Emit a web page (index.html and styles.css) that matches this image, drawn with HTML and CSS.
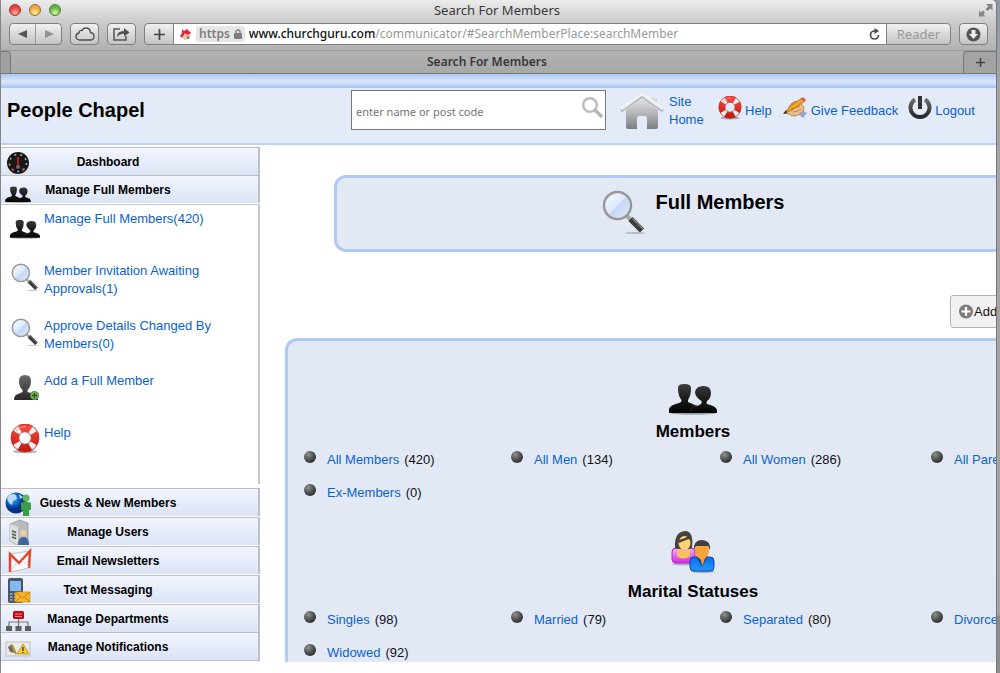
FILE: index.html
```html
<!DOCTYPE html>
<html lang="en">
<head>
<meta charset="utf-8">
<title>Search For Members</title>
<link rel="stylesheet" href="styles.css">
</head>
<body>
<svg class="defs" width="0" height="0" aria-hidden="true">
  <defs>
    <linearGradient id="gHome" x1="0" y1="0" x2="0" y2="1"><stop offset="0" stop-color="#e4e6ea"/><stop offset=".5" stop-color="#b5b7ba"/><stop offset="1" stop-color="#7c7d80"/></linearGradient>
    <linearGradient id="gBlack" x1="0" y1="0" x2="0" y2="1"><stop offset="0" stop-color="#3c3c3c"/><stop offset=".6" stop-color="#161616"/><stop offset="1" stop-color="#050505"/></linearGradient>
    <linearGradient id="gGrey" x1="0" y1="0" x2="0" y2="1"><stop offset="0" stop-color="#6b6b6b"/><stop offset="1" stop-color="#262626"/></linearGradient>
    <linearGradient id="gLens" x1="0" y1="0" x2="1" y2="1"><stop offset="0" stop-color="#fbfdff"/><stop offset=".5" stop-color="#dce8fb"/><stop offset=".52" stop-color="#c3d7f7"/><stop offset="1" stop-color="#e4eefc"/></linearGradient>
    <linearGradient id="gRed" x1="0" y1="0" x2="0" y2="1"><stop offset="0" stop-color="#f5463c"/><stop offset="1" stop-color="#c51f1a"/></linearGradient>
    <linearGradient id="gPink" x1="0" y1="0" x2="0" y2="1"><stop offset="0" stop-color="#f3b0f5"/><stop offset="1" stop-color="#d02be0"/></linearGradient>
    <linearGradient id="gBlue" x1="0" y1="0" x2="0" y2="1"><stop offset="0" stop-color="#1767e8"/><stop offset="1" stop-color="#1a9bff"/></linearGradient>
    <radialGradient id="gGlobe" cx=".35" cy=".3"><stop offset="0" stop-color="#4fb4ff"/><stop offset=".6" stop-color="#0b62c4"/><stop offset="1" stop-color="#052f80"/></radialGradient>
    <radialGradient id="gBadge"><stop offset="0" stop-color="#b9e09c"/><stop offset="1" stop-color="#4c8a35"/></radialGradient>
    <symbol id="people" viewBox="0 0 48 32">
      <ellipse cx="24" cy="30" rx="23" ry="1.7" fill="#000" opacity=".3"/>
      <path fill="url(#gBlack)" d="M9 5Q9 1 15.500 1T22 5Q22 12 20 15Q18.500 17 19 19L28 23Q33 21.500 33 19Q33 18 31 17Q26 13 26 9Q27 3 34.500 3T42 10Q42 15 38 18Q37 20 38 21Q47 23 48 27V30H0V26Q1 22 10 20Q13 19 12.500 17Q9 13 9 5Z"/>
      <path d="M26 24Q33 22 33 19M22 29Q21 24 28 22" fill="none" stroke="#393939" stroke-width=".7"/>
    </symbol>
    <symbol id="magnifier" viewBox="0 0 44 44">
      <ellipse cx="33" cy="43" rx="10" ry="1" fill="#777" opacity=".4"/>
      <path d="M25 26L30 31" stroke="#a9a9a6" stroke-width="4"/>
      <path d="M28.500 29L40 40.500" stroke="#3b3b3b" stroke-width="6"/>
      <path d="M30.500 28.500L41 39" stroke="#858585" stroke-width="1.200"/>
      <circle cx="15.500" cy="15.500" r="13.500" fill="url(#gLens)" stroke="#979797" stroke-width="2.500"/>
      <circle cx="15.500" cy="15.500" r="12" fill="none" stroke="#d8d8d8" stroke-width=".8"/>
    </symbol>
    <symbol id="lifebuoy" viewBox="0 0 30 30">
      <ellipse cx="15" cy="27.500" rx="12" ry="1.800" fill="#555" opacity=".45"/>
      <circle cx="15" cy="14" r="10" fill="none" stroke="url(#gRed)" stroke-width="8"/>
      <circle cx="15" cy="14" r="10" fill="none" stroke="#f3f1ef" stroke-width="8" stroke-dasharray="4.700 11" stroke-dashoffset="-5.500"/>
      <circle cx="15" cy="14" r="14" fill="none" stroke="#b7201b" stroke-width=".7"/>
      <circle cx="15" cy="14" r="6.300" fill="none" stroke="#a8625e" stroke-width=".8"/>
      <path d="M6 7Q10 2 16 2.500" fill="none" stroke="#ff9a90" stroke-width="1"/>
    </symbol>
  </defs>
</svg>

<div class="window">
  <header class="chrome">
    <div class="titlebar">
      <div class="lights"><i class="light red"></i><i class="light amber"></i><i class="light green"></i></div>
      <span class="window-title">Search For Members</span>
      <svg class="fullscreen" width="14" height="14" viewBox="0 0 14 14" fill="#858585"><path d="M7 1h6.500v6.500L11.500 5.500L8.500 8L6.500 6L9.500 3.500ZM0 7.500L2 9.500L4 7.500L6 9.500L4.500 11.500L6.500 13.500H0Z"/></svg>
    </div>
    <div class="toolbar">
      <div class="segment">
        <button class="tool back" aria-label="Back"><svg width="10" height="10" viewBox="0 0 10 10"><path d="M9 1V9L0 5Z" fill="#555"/></svg></button>
        <button class="tool forward" aria-label="Forward"><svg width="10" height="10" viewBox="0 0 10 10"><path d="M1 1V9L10 5Z" fill="#929292"/></svg></button>
      </div>
      <button class="tool cloud" aria-label="iCloud tabs"><svg width="20" height="14" viewBox="0 0 20 14"><path d="M5 13Q1 13 1 9.500Q1 6.500 4 6Q4 3 7 3.500Q8 1 11 1Q15 1 15.500 5.500Q19 6 19 9.500Q19 13 15 13Z" fill="none" stroke="#4c4c4c" stroke-width="1.300"/></svg></button>
      <button class="tool share" aria-label="Share"><svg width="17" height="14" viewBox="0 0 17 14"><path d="M7 2H1V13H13V9" fill="none" stroke="#555" stroke-width="1.500"/><path d="M4 10Q4 4 11 4V1L16.500 5.500L11 9.500V6.700Q7 6.500 4 10Z" fill="#505050"/></svg></button>
      <div class="address">
        <button class="add-bookmark" aria-label="Add bookmark"><svg width="11" height="11" viewBox="0 0 11 11"><path d="M5.500 0V11M0 5.500H11" stroke="#444" stroke-width="1.700"/></svg></button>
        <div class="url">
          <svg width="13" height="14" viewBox="0 0 13 14"><path d="M4 5L12 5L11 12L5 13L3 9Z" fill="#e8c5a2"/><path d="M3 2L5 4L8 2L12 6L8 8L6 6L3 11L1 9L3 6Z" fill="#e7203f"/><path d="M8 9H10V12H8Z" fill="#4d9b87"/></svg>
          <span class="secure">https <svg width="8" height="10" viewBox="0 0 8 10"><rect y="4" width="8" height="6" rx="1" fill="#7d7d7d"/><path d="M2 5V3Q2 1 4 1T6 3V5" fill="none" stroke="#7d7d7d" stroke-width="1.400"/></svg></span>
          <span class="path"><b>www.churchguru.com</b>/communicator/#SearchMemberPlace:searchMember</span>
          <button class="reload" aria-label="Reload"><svg width="11" height="12" viewBox="0 0 11 12"><path d="M7.500 3H5.500A4 4 0 1 0 9.500 7" fill="none" stroke="#4b4b4b" stroke-width="1.700"/><path d="M5.500 0L10 3L5.500 6Z" fill="#4b4b4b"/></svg></button>
        </div>
        <button class="reader">Reader</button>
      </div>
      <button class="tool downloads" aria-label="Downloads"><svg width="15" height="15" viewBox="0 0 15 15"><circle cx="7.500" cy="7.500" r="7" fill="#555"/><path d="M5.500 3H9.500V7H12L7.500 12L3 7H5.500Z" fill="#eee"/></svg></button>
    </div>
    <div class="tabs">
      <i class="tab-edge"></i>
      <span class="tab">Search For Members</span>
      <button class="new-tab" aria-label="New tab"><svg width="9" height="9" viewBox="0 0 9 9"><path d="M4.500 0V9M0 4.500H9" stroke="#444" stroke-width="1.500"/></svg></button>
    </div>
  </header>

  <div class="ribbon"></div>
  <div class="site-header">
    <h1 class="brand">People Chapel</h1>
    <form class="search">
      <input type="text" aria-label="Search members" placeholder="enter name or post code">
      <button type="button" aria-label="Search"><svg width="23" height="23" viewBox="0 0 23 23"><circle cx="9" cy="9" r="6.800" fill="none" stroke="#bdbdbd" stroke-width="2.600"/><path d="M14 14L21 21" stroke="#b5b5b5" stroke-width="3.500"/></svg></button>
    </form>
    <nav class="links">
      <a class="home" href="#"><svg width="44" height="38" viewBox="0 0 44 38"><path d="M6 17L22 4L38 17V34Q38 36 36 36H27V25Q27 23 25 23H19Q17 23 17 25V36H8Q6 36 6 34Z" fill="url(#gHome)"/><path d="M31 5H37V13L31 8Z" fill="#d6d8dc"/><path d="M1 18L22 3L43 18" fill="none" stroke="#b4b8be" stroke-width="3"/><path d="M1 16L22 1L43 16" fill="none" stroke="#f0f1f3" stroke-width="3"/></svg><span>Site Home</span></a>
      <a class="help" href="#"><svg width="24" height="24"><use href="#lifebuoy"/></svg>Help</a>
      <a class="feedback" href="#"><svg width="25" height="24" viewBox="0 0 25 24"><path d="M17 13L24 17L20 22L15 18Z" fill="#8eaad8"/><path d="M1 17Q7 13 8 8Q11 4 16 6L21 11Q22 15 17 18Q10 22 6 18Z" fill="#e9bd8d" stroke="#a87749" stroke-width=".8"/><path d="M2 17L7 10L19 2L22 5L9 14Z" fill="#f6a51c" stroke="#9a5c10" stroke-width=".7"/><path d="M18 3L20 1L23 4L21 6Z" fill="#e2554e"/><path d="M8 13Q13 12 17 10M10 16Q14 16 18 13" fill="none" stroke="#a87749" stroke-width=".8"/><path d="M0 18L3 14L4 17Z" fill="#333"/></svg>Give Feedback</a>
      <a class="logout" href="#"><svg width="24" height="24" viewBox="0 0 24 24"><path d="M7 3.500A9.500 9.500 0 1 0 17 3.500" fill="none" stroke="url(#gGrey)" stroke-width="4"/><path d="M12 0V13" stroke="#343434" stroke-width="4"/></svg>Logout</a>
    </nav>
  </div>

  <div class="workspace">
    <aside class="sidebar">
      <button class="bar"><svg width="28" height="26" viewBox="0 0 28 26"><circle cx="14" cy="14" r="11" fill="#171717"/><circle cx="14" cy="14" r="8.500" fill="none" stroke="#aaa" stroke-width="1.600" stroke-dasharray="2 4"/><path d="M14 8V17" stroke="#e22" stroke-width="1.500"/><circle cx="14" cy="18" r="2" fill="#6a6a6a"/><path d="M8 22L10 20M20 22L18 20" stroke="#d22" stroke-width="1.500"/></svg><span>Dashboard</span></button>
      <button class="bar spaced"><svg width="28" height="26" viewBox="0 0 28 26"><use href="#people" x="1" y="9" width="26" height="17"/></svg><span>Manage Full Members</span></button>
      <ul class="menu">
        <li><svg width="30" height="33" viewBox="0 0 30 33"><use href="#people" x="0" y="9" width="30" height="20"/></svg><a href="#">Manage Full Members(420)</a></li>
        <li><svg width="30" height="33" viewBox="0 0 30 33"><use href="#magnifier" x="1" y="1" width="28" height="28"/></svg><a href="#">Member Invitation Awaiting Approvals(1)</a></li>
        <li><svg width="30" height="33" viewBox="0 0 30 33"><use href="#magnifier" x="1" y="1" width="28" height="28"/></svg><a href="#">Approve Details Changed By Members(0)</a></li>
        <li><svg width="30" height="33" viewBox="0 0 30 33"><path d="M9 9Q9 3 15 3T21 9Q21 15 17.500 18V20L24 22Q28 24 28 28H4Q4 23 8 22L12.500 20V18Q9 15 9 9Z" fill="url(#gGrey)"/><circle cx="24.500" cy="23.500" r="4.500" fill="url(#gBadge)"/><path d="M24.500 21V26M22 23.500H27" stroke="#1d4d12" stroke-width="1.300"/></svg><a href="#">Add a Full Member</a></li>
        <li><svg width="30" height="33" viewBox="0 0 30 33"><use href="#lifebuoy" x="0" y="0" width="30" height="30"/></svg><a href="#">Help</a></li>
      </ul>
      <button class="bar spaced"><svg width="28" height="26" viewBox="0 0 28 26"><circle cx="12" cy="13" r="10.500" fill="url(#gGlobe)"/><path d="M5 5Q9 3 12 5L13 9L9 11L8 15L5 13L3 9ZM15 4L19 7L16 9Z" fill="#b8dcf7"/><circle cx="22" cy="8" r="3.500" fill="#5cb765"/><path d="M17 13Q22 10 27 13V20H25V26H19V20H17Z" fill="#3c9e48"/></svg><span>Guests &amp; New Members</span></button>
      <button class="bar spaced"><svg width="28" height="26" viewBox="0 0 28 26"><path d="M6 5L16 1L24 4V22L13 26L6 22Z" fill="#b9bcbc" stroke="#8d9190" stroke-width=".7"/><path d="M6 5L14 8V26L6 22Z" fill="#dcdedd"/><path d="M8 12L12 13.500M8 15L12 16.500M8 18L12 19.500" stroke="#555" stroke-width="1.500"/><circle cx="19.500" cy="14" r="3" fill="#efcfa0"/><path d="M14 26Q14 18 19.500 18T25 26Z" fill="#41659d"/></svg><span>Manage Users</span></button>
      <button class="bar spaced"><svg width="28" height="26" viewBox="0 0 28 26"><path d="M6 6L26 3L25 20L6 24Z" fill="#fafafa" stroke="#c8c2bf"/><path d="M6 24V6L15 15L26 3L25 20" fill="none" stroke="#e3482f" stroke-width="2.500"/><path d="M7 23L13 14M25 19L18 12" stroke="#cfcfcf" stroke-width=".8"/></svg><span>Email Newsletters</span></button>
      <button class="bar spaced"><svg width="28" height="26" viewBox="0 0 28 26"><rect x="4" y="1" width="15" height="25" rx="2" fill="#465567"/><rect x="6" y="4" width="11" height="10" fill="#83b9f0"/><path d="M6 17H17M6 20H17M6 23H17" stroke="#a8b3be" stroke-width="1.600" stroke-dasharray="2.500 1.500"/><rect x="11" y="15" width="15" height="10" fill="#f6b52c" stroke="#d18a0c" stroke-width=".7"/><path d="M11 15L18.500 21L26 15M11 25L16.500 20M26 25L20.500 20" fill="none" stroke="#bd7b0c" stroke-width=".9"/></svg><span>Text Messaging</span></button>
      <button class="bar"><svg width="28" height="26" viewBox="0 0 28 26"><rect x="9" y="5" width="11" height="8" rx="1.500" fill="#c80718"/><path d="M11 8H18M11 10.500H18" stroke="#f08b90"/><path d="M14.500 13V20M5 20V16H24V20" fill="none" stroke="#777" stroke-width="1.200"/><path d="M2 20H8V25H2ZM11.500 20H17.500V25H11.500ZM21 20H27V25H21Z" fill="#5e5e60"/></svg><span>Manage Departments</span></button>
      <button class="bar"><svg width="28" height="26" viewBox="0 0 28 26"><rect x="2" y="8" width="24" height="14" fill="#ebebe6" stroke="#c0c0bd"/><path d="M4 13L8 10L11 19L6 18Z" fill="#6e6e67"/><path d="M8 11L12 20" stroke="#b29732" stroke-width="2"/><path d="M19 10L25 20H13Z" fill="#f8cd2a" stroke="#a88a21" stroke-width=".8"/><path d="M19 13V17M19 18V19" stroke="#333" stroke-width="1.300"/></svg><span>Manage Notifications</span></button>
    </aside>

    <main class="main">
      <div class="canvas">
        <section class="hero panel">
          <svg width="44" height="44"><use href="#magnifier"/></svg>
          <h2>Full Members</h2>
        </section>
        <button class="add"><svg width="14" height="15" viewBox="0 0 14 15"><circle cx="7" cy="7.500" r="7" fill="#7d7d7d"/><path d="M7 3V12M2.500 7.500H11.500" stroke="#fff" stroke-width="2.200"/></svg>Add</button>
        <div class="groups panel">
          <section class="group">
            <svg width="48" height="32"><use href="#people"/></svg>
            <h3>Members</h3>
            <ul class="filters">
              <li><a href="#">All Members</a> (420)</li>
              <li><a href="#">All Men</a> (134)</li>
              <li><a href="#">All Women</a> (286)</li>
              <li><a href="#">All Parents</a></li>
              <li><a href="#">Ex-Members</a> (0)</li>
            </ul>
          </section>
          <section class="group">
            <svg width="44" height="44" viewBox="0 0 44 44"><ellipse cx="12" cy="33" rx="11" ry="1.500" opacity=".25"/><ellipse cx="32" cy="40.500" rx="12" ry="1.500" opacity=".3"/><rect x="1" y="17" width="23" height="15" rx="4" fill="url(#gPink)" stroke="#bd20cc"/><path d="M6 18Q12 22 19 18V25Q12 30 6 25Z" fill="#f7c45b"/><path d="M4 17Q3 1 14 0Q23 0 21 17Q17 19 13 17Q7 19 4 17Z" fill="#45423f"/><ellipse cx="13.500" cy="12" rx="6" ry="7" fill="#fcd36c"/><path d="M7 9Q14 8 19 4L20 10L18 8Q12 10 8 12Z" fill="#45423f"/><rect x="19" y="26" width="24" height="14" rx="4" fill="url(#gBlue)" stroke="#0a45b4"/><path d="M25 25H37L31 36Z" fill="#153f8c"/><path d="M28 24H35L31.500 35Z" fill="#f79b2b"/><ellipse cx="31" cy="20" rx="7" ry="8" fill="#f9a238"/><path d="M23 19Q22 10 30 9Q40 9 39 19L37 15H25Z" fill="#413d3b"/></svg>
            <h3>Marital Statuses</h3>
            <ul class="filters">
              <li><a href="#">Singles</a> (98)</li>
              <li><a href="#">Married</a> (79)</li>
              <li><a href="#">Separated</a> (80)</li>
              <li><a href="#">Divorced</a></li>
              <li><a href="#">Widowed</a> (92)</li>
            </ul>
          </section>
        </div>
      </div>
    </main>
  </div>
</div>
</body>
</html>
```

FILE: styles.css
```css
* { box-sizing: border-box; }

body {
  margin: 0;
  background: linear-gradient(#8d97a8, #a5a5a5 90px, #a3a3a3 615px, #8c8c8c 616px);
  font: 13px/18px "Liberation Sans", Arial, sans-serif;
  color: #111;
}

h1, h2, h3, ul { margin: 0; padding: 0; }
ul { list-style: none; }
svg { flex: none; display: block; }
button { font: inherit; color: inherit; padding: 0; border: 0; background: none; }
a { color: #0a62d0; text-decoration: none; }
.defs { position: absolute; }

.window {
  display: flex;
  flex-direction: column;
  min-height: 100vh;
  margin-right: 4px;
  border-left: 1px solid #858585;
  border-top-right-radius: 5px;
  background: #fff;
  overflow: hidden;
  box-shadow: 1px 0 0 #777;
}

/* Browser chrome */
.chrome {
  background: linear-gradient(#ececec, #c9c9c9 24px, #b2b2b2 50px, #a8a8a8);
  border-bottom: 1px solid #777;
  font-family: "Noto Sans", sans-serif;
  color: #383838;
}
.titlebar {
  display: grid;
  grid-template-columns: 52px 1fr 60px;
  align-items: center;
  height: 22px;
  padding: 0 3px 2px 8px;
}
.lights { display: flex; gap: 8px; }
.light { width: 12px; height: 12px; border-radius: 50%; border: 1px solid #7a5a5a; }
.red { background: radial-gradient(circle at 50% 80%, #ffb0a8, #e8413f 60%); border-color: #9c3532; }
.amber { background: radial-gradient(circle at 50% 80%, #fff0a0, #eda63a 60%); border-color: #996a2c; }
.green { background: radial-gradient(circle at 50% 80%, #d8f5a4, #66b247 60%); border-color: #4f7d38; }
.window-title { text-align: center; }
.fullscreen { justify-self: end; }
.toolbar { display: flex; gap: 8px; padding: 1px 8px 5px; }
.segment, .tool, .address {
  height: 22px;
  border: 1px solid #808080;
  border-radius: 4px;
  background: linear-gradient(#f0f0f0, #c4c4c4);
}
.tool { display: grid; place-items: center; width: 29px; }
.segment { display: flex; width: 53px; }
.segment .tool { height: 20px; border: 0; background: none; flex: 1; }
.segment .forward { border-left: 1px solid #9a9a9a; border-radius: 0; }
.address { display: flex; flex: 1; overflow: hidden; }
.add-bookmark { display: grid; place-items: center; width: 29px; border-right: 1px solid #808080; }
.url { display: flex; align-items: center; flex: 1; gap: 4px; padding: 0 6px 0 5px; background: #fff; min-width: 0; }
.secure {
  display: flex;
  align-items: center;
  gap: 4px;
  padding: 0 3px;
  border-radius: 2px;
  background: #e6e6e6;
  color: #7d7d7d;
  font-size: 12px;
  font-weight: 600;
  line-height: 16px;
}
.path { flex: 1; font-size: 12px; color: #999; white-space: nowrap; overflow: hidden; }
.path b { color: #111; font-weight: 500; }
.reader { width: 64px; border-left: 1px solid #808080; color: #999; }
.tabs { display: flex; height: 23px; border-top: 1px solid #999; }
.tab-edge { width: 10px; border: 1px solid #777; border-left: 0; border-bottom: 0; border-top-right-radius: 4px; background: #a0a0a0; }
.tab { flex: 1; text-align: center; font-size: 12px; font-weight: 600; line-height: 22px; }
.new-tab { display: grid; place-items: center; width: 33px; border: 1px solid #777; border-width: 1px 0 0 1px; border-top-left-radius: 4px; background: #a3a3a3; }

/* Site header */
.ribbon { height: 14px; background: linear-gradient(#aac7f7, #dae6fa 50%, #d5e2f9 60%, #a4c3f6); }
.site-header {
  display: grid;
  grid-template-columns: 344px 255px 1fr;
  padding: 2px 0 12px 6px;
  border-bottom: 2px solid #b9d1f8;
  background: #e3eaf8;
}
.brand { font-size: 20px; line-height: 40px; color: #000; }
.search { display: flex; align-items: center; height: 40px; border: 1px solid #777; background: #fff; }
.search input {
  flex: 1;
  min-width: 0;
  height: 38px;
  padding: 2px 0 0 4px;
  border: 0;
  outline: 0;
  background: none;
  font: 11px "Noto Sans", sans-serif;
}
.search input::placeholder { color: #757575; }
.search button { padding: 0 1px 5px 0; }
.links { display: flex; align-items: flex-start; padding: 3px 19px 0 14px; }
.links a { display: flex; align-items: flex-start; gap: 3px; white-space: nowrap; line-height: 36px; }
.links .home { gap: 5px; white-space: normal; line-height: 18px; }
.home span { width: 49px; }
.links svg { margin-top: 3px; }
.links .home svg { margin-top: 0; }
.feedback { margin-left: 11px; }
.logout { margin-left: 10px; }

/* Sidebar */
.workspace { display: flex; padding: 2px 0 12px; }
.sidebar { flex: none; display: flex; flex-direction: column; width: 259px; }
.bar {
  display: flex;
  align-items: center;
  height: 28px;
  border: 1px solid #bfc0c4;
  border-width: 1px 2px 0 0;
  background: linear-gradient(#f2f5fc, #dbe4f6);
  font-size: 12px;
  font-weight: bold;
  color: #000;
}
.bar.spaced { margin-bottom: 1px; }
.bar:last-child { height: 29px; border-bottom-width: 1px; }
.bar svg { margin: 1px 0 0 3px; }
.bar span { width: 152px; text-align: center; white-space: nowrap; }
.menu {
  display: flex;
  flex-direction: column;
  gap: 19px;
  margin-bottom: 4px;
  padding: 5px 20px 27px 9px;
  border: solid #c8c8c8;
  border-width: 1px 2px 0 0;
}
.menu li { display: flex; gap: 4px; }

/* Main area */
.main { flex: 1; min-width: 0; overflow: hidden; }
.canvas { display: flex; flex-direction: column; min-width: 866px; padding: 28px 25px 0; }
.panel { border: 3px solid #b0caf6; border-radius: 12px; background: #e2e9f5; }
.hero { display: flex; justify-content: center; gap: 10px; margin: 0 49px; padding: 12px 0 15px; }
.hero h2 { font-size: 20px; line-height: 24px; color: #000; }
.add {
  display: flex;
  align-items: center;
  align-self: flex-end;
  gap: 1px;
  width: 151px;
  height: 33px;
  margin: 43px 0 10px;
  padding-left: 8px;
  border: 1px solid #b5b5b5;
  border-radius: 3px;
  background: #f1f1f1;
}
.groups { padding-top: 42px; border-bottom: 0; border-radius: 12px 12px 0 0; }
.group { display: flex; flex-direction: column; align-items: center; }
.group + .group { padding-top: 29px; }
.group h3 { margin: 5px 0 7px; font-size: 17px; line-height: 24px; color: #000; }
.filters {
  align-self: stretch;
  display: grid;
  grid-template-columns: 207px 209px 211px 1fr;
  row-gap: 15px;
  padding-left: 16px;
}
.filters li { display: flex; gap: 5px; }
.filters li::before {
  content: "";
  width: 12px;
  height: 12px;
  margin-right: 6px;
  border-radius: 50%;
  background: radial-gradient(circle at 35% 30%, #909090, #4b4b4b 50%, #1c1c1c);
}
```
